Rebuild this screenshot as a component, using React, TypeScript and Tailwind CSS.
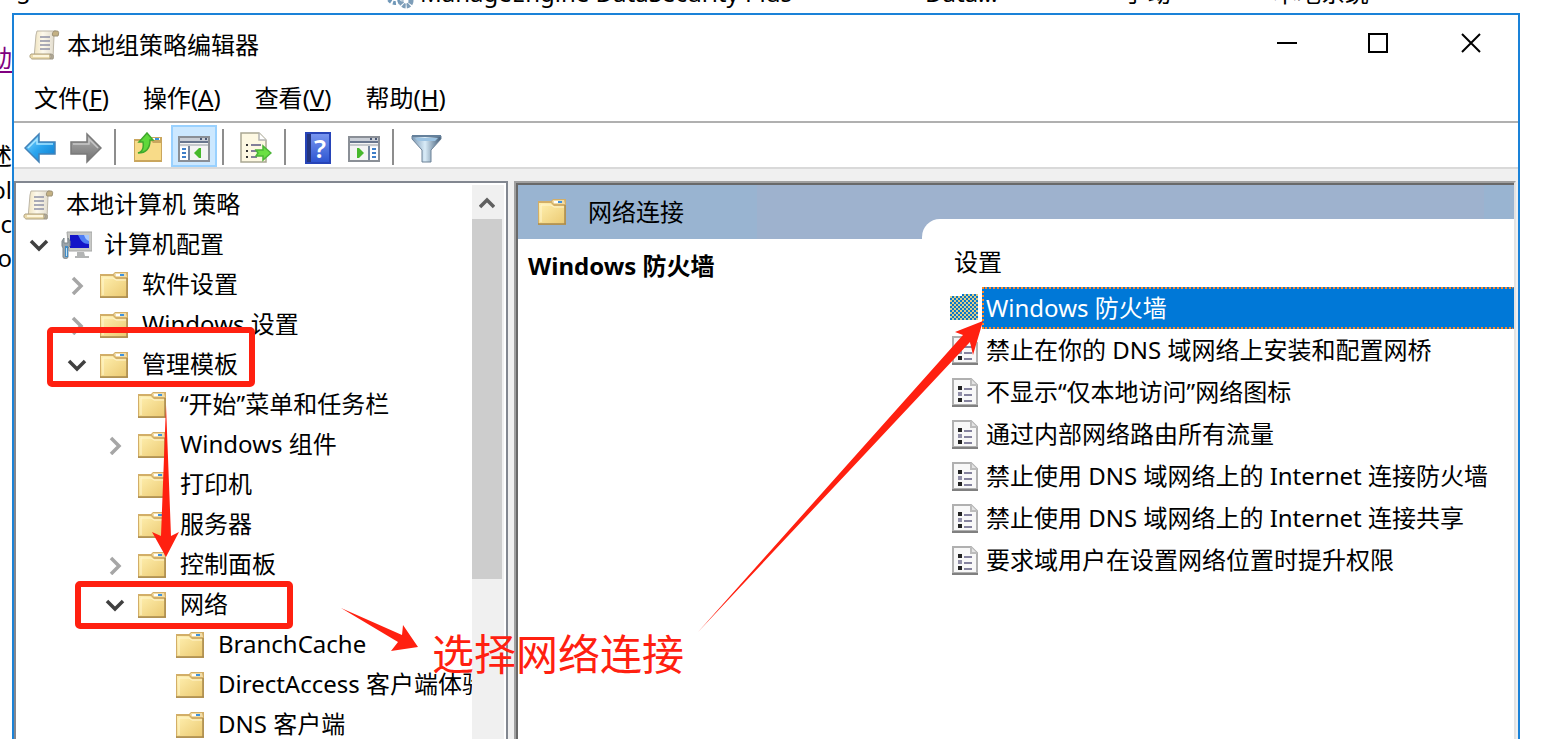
import { useState } from 'react';
import type { ReactNode } from 'react';
import clsx from 'clsx';

type TreeNode = {
  name: string;
  icon?: 'folder' | 'computer';
  state?: 'open' | 'closed';
  children?: TreeNode[];
};

const policyTree: TreeNode = {
  name: '计算机配置',
  icon: 'computer',
  state: 'open',
  children: [
    { name: '软件设置', state: 'closed' },
    { name: 'Windows 设置', state: 'closed' },
    {
      name: '管理模板',
      state: 'open',
      children: [
        { name: '“开始”菜单和任务栏' },
        { name: 'Windows 组件', state: 'closed' },
        { name: '打印机' },
        { name: '服务器' },
        { name: '控制面板', state: 'closed' },
        {
          name: '网络',
          state: 'open',
          children: [
            { name: 'BranchCache' },
            { name: 'DirectAccess 客户端体验设置' },
            { name: 'DNS 客户端' },
          ],
        },
      ],
    },
  ],
};

const menus = [
  { name: '文件', accessKey: 'F' },
  { name: '操作', accessKey: 'A' },
  { name: '查看', accessKey: 'V' },
  { name: '帮助', accessKey: 'H' },
];

const settings = [
  'Windows 防火墙',
  '禁止在你的 DNS 域网络上安装和配置网桥',
  '不显示“仅本地访问”网络图标',
  '通过内部网络路由所有流量',
  '禁止使用 DNS 域网络上的 Internet 连接防火墙',
  '禁止使用 DNS 域网络上的 Internet 连接共享',
  '要求域用户在设置网络位置时提升权限',
];

/* ---------- icons ---------- */

function ScrollIcon() {
  return (
    <svg className="w-8 h-8 shrink-0" viewBox="0 0 32 32" fill="none" aria-hidden="true">
      <defs>
        <linearGradient id="paper" x1="0" y1="0" x2="1" y2="0">
          <stop offset="0" stopColor="#efe2bd" />
          <stop offset="0.4" stopColor="#fdf9ec" />
          <stop offset="1" stopColor="#ded8ca" />
        </linearGradient>
      </defs>
      <path d="M9 2h19l-2 5-1 22H6L8 6z" fill="url(#paper)" stroke="#bdb6a6" />
      <path d="M26 2c-2 2-2 4-1 5h5c1-3 1-5-1-5z" fill="#c4b183" stroke="#9d9277" />
      <path d="M3 25h19v5H4c-2-1-3-3-1-5z" fill="#ead9aa" stroke="#ada080" />
      <path d="M22 25c3 0 4 1 3 5h-3c2-2 1-4 0-5z" fill="#b5ac98" stroke="#9d9686" />
      <path d="M5 27h16" stroke="#fdf6dd" strokeWidth="2" />
      <path d="M12 8h10M12 12h10M12 16h10M12 20h10" stroke="#8f91a6" strokeWidth="1.5" />
    </svg>
  );
}

function FolderIcon() {
  return (
    <svg className="w-8 h-8 shrink-0" viewBox="0 0 32 32" fill="none" aria-hidden="true">
      <defs>
        <linearGradient id="folderFace" x1="0" y1="0" x2="1" y2="1">
          <stop offset="0" stopColor="#fff0b0" />
          <stop offset="1" stopColor="#ebc971" />
        </linearGradient>
      </defs>
      <path d="M2 5h13l2-2h13v26H2z" fill="#d2ae68" />
      <path d="M17 4h11l1 4H18l-2-2z" fill="#f1dca6" />
      <path d="M18 5h7v2h-7z" fill="#fff" />
      <path d="M22 5h4v2h-4z" fill="#3f93dd" />
      <path d="M3 7h12l3 3h11v18H3z" fill="url(#folderFace)" />
      <path d="M5 26V9h10l3 2h10" stroke="#fff6cf" />
      <path d="M2 28h28M29 9v19" stroke="#a98a4d" strokeWidth="1.5" />
    </svg>
  );
}

function CheckeredFolderIcon() {
  return (
    <svg className="w-8 h-8 shrink-0" viewBox="0 0 32 32" shapeRendering="crispEdges" aria-hidden="true">
      <defs>
        <pattern id="checker" width="4" height="4" patternUnits="userSpaceOnUse">
          <rect width="4" height="4" fill="#e0cd86" />
          <path d="M0 0h2v2H0zM2 2h2v2H2z" fill="#0878ca" />
        </pattern>
      </defs>
      <path d="M2 4h12V2h16v26H2z" fill="url(#checker)" />
    </svg>
  );
}

function ComputerIcon() {
  return (
    <svg className="w-8 h-8 shrink-0" viewBox="0 0 32 32" aria-hidden="true">
      <path d="M7 3h25v19H9z" fill="#c7c8c6" stroke="#a5a6a5" />
      <path d="M10 6h19v13H10z" fill="#1414c8" />
      <path d="M18 6h11v9c-6 0-8-3-11-9z" fill="#4f7df4" />
      <path d="M24 6h5v6c-3-1-4-3-5-6z" fill="#a7c8ff" />
      <path d="M17 23h7l1 4h4v2H15v-2h2z" fill="#b2b4b4" />
      <path d="M2 12l2-3v5h4V9l2 3v5l-2 2v9c0 2-5 2-5 0v-9l-1-2z" fill="#9ca4aa" stroke="#7d868b" />
      <path d="M5 17h3v11H5z" fill="#418bc4" />
      <path d="M6 19h1v8H6z" fill="#c5e4f8" />
    </svg>
  );
}

function SettingIcon() {
  return (
    <svg className="w-8 h-8 shrink-0" viewBox="0 0 32 32" fill="none" aria-hidden="true">
      <path d="M5 3h18l6 6v20H5z" fill="#f8f8f8" stroke="#b0b0b0" strokeWidth="2" />
      <path d="M23 3v6h6" fill="#e3e3e3" stroke="#bcbcbc" strokeWidth="2" />
      <path d="M4 30h26" stroke="#808080" strokeWidth="2" />
      <path d="M10 10h4v4h-4zM10 22h4v4h-4z" fill="#222" />
      <path d="M10 16h4v4h-4z" fill="#9290a8" />
      <path d="M16 13h8M16 19h8M16 25h8" stroke="#85839e" strokeWidth="2" />
    </svg>
  );
}

function ArrowIcon({ forward = false }: { forward?: boolean }) {
  return (
    <svg
      className={clsx('w-8 h-8', forward && '-scale-x-100')}
      viewBox="0 0 32 32"
      strokeWidth="1.5"
      aria-hidden="true"
    >
      <defs>
        <linearGradient id="blueArrow" x1="0" y1="0" x2="1" y2="1">
          <stop offset="0" stopColor="#8edcff" />
          <stop offset="0.5" stopColor="#2aa4ee" />
          <stop offset="1" stopColor="#0b79ca" />
        </linearGradient>
        <linearGradient id="grayArrow" x1="0" y1="0" x2="0" y2="1">
          <stop offset="0" stopColor="#b0b0b0" />
          <stop offset="1" stopColor="#707070" />
        </linearGradient>
      </defs>
      <path
        d="M1 16L15 2v8h16v12H15v8z"
        fill={forward ? 'url(#grayArrow)' : 'url(#blueArrow)'}
        stroke={forward ? '#7a7a7a' : '#4382b8'}
      />
      <path d="M4 16l9-9v5h16" fill="none" stroke={forward ? '#c7c7c7' : '#a9e5ff'} />
    </svg>
  );
}

function UpFolderIcon() {
  return (
    <svg className="w-8 h-8" viewBox="0 0 32 32" aria-hidden="true">
      <path d="M2 7h16l2-2h10v25H2z" fill="#caa65d" />
      <path d="M3 9h16l2 2h8v17H3z" fill="#f8db88" />
      <path d="M20 6h8v2h-8z" fill="#fff" />
      <path d="M23 6h4v2h-4z" fill="#3f93dd" />
      <path
        d="M6 21c4-1 6-5 5-11H7l8-9 6 7h-3c0 8-4 13-12 13z"
        fill="#5fd83a"
        stroke="#3fa82c"
        strokeWidth="1.5"
      />
    </svg>
  );
}

function PaneIcon({ flipped = false }: { flipped?: boolean }) {
  return (
    <svg className="w-8 h-8" viewBox="0 0 32 32" fill="none" aria-hidden="true">
      <path d="M1 5h30v24H1z" fill="#f4f4f4" stroke="#8a8f96" strokeWidth="2" />
      <path d="M2 6h28v3H2z" fill="#c9ced6" />
      <path d="M2 10h28" stroke="#68758d" strokeWidth="2" />
      <path d="M22 7h2M27 7h2" stroke="#4b5975" strokeWidth="2" />
      <path d="M2 13h28" stroke="#c5c8cc" strokeWidth="2" />
      <g transform={flipped ? 'matrix(-1 0 0 1 32 0)' : undefined}>
        <path d="M2 15h9v13H2z" fill="#fff" />
        <path d="M11 14v14" stroke="#75859e" strokeWidth="2" />
        <path d="M4 17h4M4 21h4M4 25h4" stroke="#3f7fc9" strokeWidth="2" />
        <path d="M23 16v10h-2l-5-5 5-5z" fill="#47b82c" />
      </g>
    </svg>
  );
}

function ExportIcon() {
  return (
    <svg className="w-8 h-8" viewBox="0 0 32 32" fill="none" aria-hidden="true">
      <path d="M1 1h18l7 7v22H1z" fill="#fdf8e2" stroke="#a9a692" strokeWidth="1.5" />
      <path d="M19 1v7h7" fill="#fff" stroke="#b3b3b3" strokeWidth="1.5" />
      <path d="M6 12h2v2H6zM6 18h2v2H6zM6 24h2v2H6z" fill="#333" />
      <path d="M11 13h10M11 19h6M11 25h6" stroke="#827f99" strokeWidth="2" />
      <path d="M16 18h7v-4l8 7-8 7v-4h-7l2-3z" fill="#6be043" stroke="#4cb538" strokeWidth="1.5" />
    </svg>
  );
}

function HelpIcon() {
  return (
    <span className="flex w-[26px] h-8 border-2 border-[#2744b8] bg-[#23357f] pl-1">
      <span className="flex flex-1 items-center justify-center bg-linear-to-b from-[#7895ef] to-[#2f55d1] text-[26px] leading-none font-semibold text-white">
        ?
      </span>
    </span>
  );
}

function FilterIcon() {
  return (
    <svg className="w-8 h-8" viewBox="0 0 32 32" aria-hidden="true">
      <defs>
        <linearGradient id="funnel" x1="0" x2="1">
          <stop offset="0" stopColor="#7b98b4" />
          <stop offset="0.45" stopColor="#d9ecf8" />
          <stop offset="1" stopColor="#3f5a76" />
        </linearGradient>
      </defs>
      <path d="M2 4h29v3L21 18v12h-9V18L2 7z" fill="url(#funnel)" stroke="#6c8297" />
      <path d="M2 3h29v2H2z" fill="#64809b" />
      <path d="M5 6h23l-3 3H8z" fill="#9cc3e2" />
    </svg>
  );
}

function Chevron({ state }: { state?: 'open' | 'closed' }) {
  if (!state) return null;
  return (
    <svg className="w-5 h-5" viewBox="0 0 20 20" fill="none" strokeWidth="3.5" aria-hidden="true">
      {state === 'open' ? (
        <path d="M2 6l8 8 8-8" stroke="#404040" />
      ) : (
        <path d="M6 3l8 8-8 8" stroke="#a6a6a6" />
      )}
    </svg>
  );
}

function GearsIcon() {
  return (
    <svg className="w-7 h-7 shrink-0" viewBox="0 0 28 28" fill="none" aria-hidden="true">
      <circle cx="9" cy="15" r="7" stroke="#6f97b8" strokeWidth="4" strokeDasharray="3 2" />
      <circle cx="20" cy="20" r="5" stroke="#7d9db8" strokeWidth="5" strokeDasharray="3 1" />
    </svg>
  );
}

/* ---------- tree ---------- */

function TreeItem({ node }: { node: TreeNode }) {
  return (
    <li>
      <button className="flex h-10 items-center whitespace-nowrap text-left">
        <span className="mr-[11px] flex w-5 shrink-0 justify-center">
          <Chevron state={node.state} />
        </span>
        {node.icon === 'computer' ? <ComputerIcon /> : <FolderIcon />}
        <span className="ml-3 pb-0.5">{node.name}</span>
      </button>
      {node.children && (
        <ul className="pl-[38px]">
          {node.children.map((child) => (
            <TreeItem key={child.name} node={child} />
          ))}
        </ul>
      )}
    </li>
  );
}

function TreePane() {
  return (
    <nav
      aria-label="策略树"
      className="flex w-[494px] shrink-0 border-2 border-b-0 border-[#828790] bg-white pt-0.5 pr-0.5"
    >
      <div className="min-w-0 flex-1 overflow-hidden">
        <button className="flex h-10 items-center gap-3 pl-1.5">
          <ScrollIcon />
          <span className="pb-0.5">本地计算机 策略</span>
        </button>
        <ul className="pl-[13px]">
          <TreeItem node={policyTree} />
        </ul>
      </div>
      <div className="flex w-8 shrink-0 flex-col bg-[#f0f0f0] pr-0.5">
        <button aria-label="向上滚动" className="flex h-[34px] shrink-0 items-center justify-center">
          <svg className="w-4 h-4" viewBox="0 0 16 16" fill="none">
            <path d="M1 13l7-7 7 7" stroke="#606060" strokeWidth="3.5" />
          </svg>
        </button>
        <div className="h-[360px] bg-[#cdcdcd]" />
      </div>
    </nav>
  );
}

/* ---------- toolbar ---------- */

function ToolButton({ label, active, children }: { label: string; active?: boolean; children: ReactNode }) {
  return (
    <button
      aria-label={label}
      className={clsx(
        'flex h-[42px] w-[46px] items-center justify-center border-2 pt-1',
        active ? 'border-[#99d1ff] bg-[#cce8ff]' : 'border-transparent',
      )}
    >
      {children}
    </button>
  );
}

function Separator() {
  return <span className="ml-[5px] mr-[9px] mt-0.5 h-9 w-0.5 bg-[#8d8d8d]" />;
}

function Toolbar() {
  return (
    <div className="flex h-[48px] items-center border-y-2 border-t-[#b0b0b0] border-b-[#d9d9d9] pl-[3px] pt-0.5">
      <ToolButton label="后退">
        <ArrowIcon />
      </ToolButton>
      <ToolButton label="前进">
        <ArrowIcon forward />
      </ToolButton>
      <Separator />
      <ToolButton label="上移一级">
        <UpFolderIcon />
      </ToolButton>
      <ToolButton label="显示/隐藏控制台树" active>
        <PaneIcon />
      </ToolButton>
      <Separator />
      <ToolButton label="导出列表">
        <ExportIcon />
      </ToolButton>
      <Separator />
      <ToolButton label="帮助">
        <HelpIcon />
      </ToolButton>
      <ToolButton label="显示/隐藏操作窗格">
        <PaneIcon flipped />
      </ToolButton>
      <Separator />
      <ToolButton label="筛选器">
        <FilterIcon />
      </ToolButton>
    </div>
  );
}

/* ---------- details ---------- */

function DetailsPane() {
  const [selected, setSelected] = useState(0);

  return (
    <section className="ml-1.5 mr-0.5 flex min-w-0 flex-1 flex-col border-2 border-b-0 border-t-[#a0a0a0] border-l-[#a0a0a0] border-r-[#e3e3e3]">
      <div className="flex flex-1 flex-col border-t-2 border-l-2 border-[#696969] bg-white">
        <header className="flex h-[54px] shrink-0 items-center gap-5 bg-[linear-gradient(90deg,#99b4d1_24%,#9eb2ce_24%,#9eb2ce_97%,#99b4d1_97%)] pl-[18px]">
          <FolderIcon />
          <h2>网络连接</h2>
        </header>
        <div className="flex flex-1">
          <h3 className="w-[404px] shrink-0 pt-[11px] pl-2.5 font-bold leading-8">Windows 防火墙</h3>
          <div className="-mt-5 min-w-0 flex-1 rounded-tl-[18px] bg-white pt-[27px]">
            <div className="pl-8 leading-8">设置</div>
            <ul className="mt-[9px]">
              {settings.map((name, i) => (
                <li key={name}>
                  <button
                    className="flex h-[42px] w-full items-center pl-[26px] text-left whitespace-nowrap"
                    onClick={() => setSelected(i)}
                  >
                    {i === 0 ? <CheckeredFolderIcon /> : <SettingIcon />}
                    <span
                      className={clsx(
                        'ml-0.5 flex h-full flex-1 items-center border-2 pl-0.5',
                        selected === i
                          ? 'border-dotted border-[#ff8728] border-r-[#0078d7] bg-[#0078d7] text-white'
                          : 'border-transparent',
                      )}
                    >
                      {name}
                    </span>
                  </button>
                </li>
              ))}
            </ul>
          </div>
        </div>
      </div>
    </section>
  );
}

/* ---------- window ---------- */

function TitleBar() {
  return (
    <div className="flex h-[60px] items-center pl-3.5 pr-6">
      <ScrollIcon />
      <h1 className="ml-[7px]">本地组策略编辑器</h1>
      <div className="ml-auto flex gap-[46px] pb-0.5">
        <button aria-label="最小化" className="flex w-[46px] justify-center">
          <svg className="w-6 h-6" viewBox="0 0 24 24" stroke="#000" strokeWidth="2">
            <path d="M2 11h20" />
          </svg>
        </button>
        <button aria-label="最大化" className="flex w-[46px] justify-center">
          <svg className="w-6 h-6" viewBox="0 0 24 24" fill="none" stroke="#000" strokeWidth="2">
            <path d="M2 2h18v18H2z" />
          </svg>
        </button>
        <button aria-label="关闭" className="flex w-[46px] justify-center">
          <svg className="w-6 h-6" viewBox="0 0 24 24" stroke="#000" strokeWidth="2">
            <path d="M3 2l18 18M21 2L3 20" />
          </svg>
        </button>
      </div>
    </div>
  );
}

function MenuBar() {
  return (
    <div className="flex h-[46px] items-center gap-[34px] pl-5">
      {menus.map((menu) => (
        <button key={menu.accessKey}>
          {menu.name}(<u className="decoration-2 underline-offset-2">{menu.accessKey}</u>)
        </button>
      ))}
    </div>
  );
}

// Red marks laid over the window
function Annotations() {
  return (
    <div className="pointer-events-none absolute inset-0 overflow-hidden">
      <div className="absolute left-[47px] top-[327px] h-[60px] w-[208px] rounded-[5px] border-6 border-[#ff2010]" />
      <div className="absolute left-[75px] top-[581px] h-12 w-[218px] rounded-[5px] border-6 border-[#ff2010]" />
      <svg className="absolute left-0 top-0" width="1000" height="739" fill="#ff2010" aria-hidden="true">
        <path d="M166 405l5 131 8-4-13 25-14-25 9 4z" />
        <path d="M341 608l61 27 1-10 15 22-27 4 7-9z" />
        <path d="M698 632l265-297-8-3 28-11-10 34-3-13z" />
      </svg>
      <p className="absolute left-[432px] top-[624px] whitespace-nowrap text-[42px] leading-[60px] text-[#ff2010]">
        选择网络连接
      </p>
    </div>
  );
}

export default function App() {
  return (
    <div className="relative flex h-screen flex-col overflow-hidden bg-white font-['Noto_Sans','Noto_Sans_CJK_SC',sans-serif] text-[24px] leading-8 text-black">
      {/* service list behind the window */}
      <div className="flex h-[13px] shrink-0 items-end overflow-hidden whitespace-nowrap pb-1 pl-4">
        <span className="w-[370px] pb-1">g</span>
        <GearsIcon />
        <span className="ml-1.5 w-[505px]">ManageEngine DataSecurity Plus</span>
        <span className="w-[198px]">Data...</span>
        <span className="w-[150px]">手动</span>
        <span>本地系统</span>
      </div>
      <div className="flex min-h-0 flex-1">
        <div className="flex w-3 shrink-0 flex-col items-end overflow-hidden whitespace-nowrap pt-7 leading-[34px]">
          <a href="#start" className="text-[#800080] underline decoration-2 underline-offset-4">
            启动
          </a>
          <span className="mt-16">描述</span>
          <span>Tool</span>
          <span>Sec</span>
          <span>to</span>
        </div>
        <main className="mr-[45px] flex min-w-0 flex-1 flex-col border-2 border-b-0 border-[#1a82d8] bg-white">
          <TitleBar />
          <MenuBar />
          <Toolbar />
          <div className="flex min-h-0 flex-1 bg-[#f0f0f0] pt-3">
            <TreePane />
            <DetailsPane />
          </div>
        </main>
      </div>
      <Annotations />
    </div>
  );
}
